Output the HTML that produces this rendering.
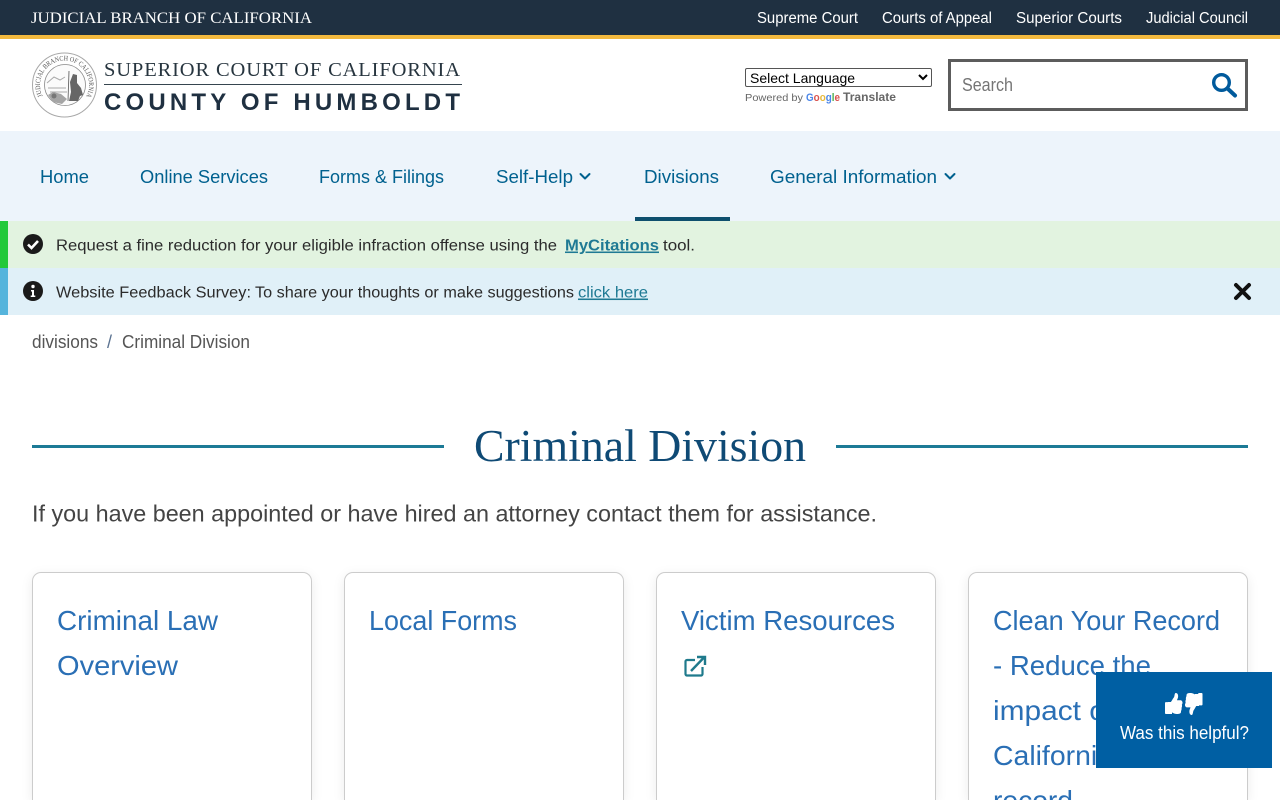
<!DOCTYPE html>
<html lang="en"><head><meta charset="utf-8"><title>Criminal Division</title>
<style>
html,body{margin:0;padding:0;width:1280px;height:800px;overflow:hidden;background:#fff}
body{position:relative;font-family:"Liberation Sans",sans-serif}
.b{position:absolute}
.card{position:absolute;top:572px;width:278px;height:227px;background:#fff;border:1px solid #ccc;border-bottom:0;border-radius:9px 9px 0 0;box-shadow:0 3px 12px rgba(0,0,0,.08)}
svg.o{position:absolute;left:0;top:0;overflow:hidden}
text{font-family:"Liberation Sans",sans-serif}
.s{font-family:"Liberation Serif",serif}
.top{fill:#fff;font-size:15.5px}
.nav{fill:#00618f;font-size:18.5px}
.al{fill:#2b2b2b;font-size:15.5px}
.tt{fill:#2a6fb5;font-size:28px}
select{position:absolute;left:745px;top:68px;width:187px;height:19px;font:14px "Liberation Sans",sans-serif;padding:0;background:#fff;color:#000;border:1px solid #555;border-radius:2px}
</style></head><body>
<div class="b" style="left:0;top:0;width:1280px;height:35px;background:#1f3041"></div>
<div class="b" style="left:0;top:35px;width:1280px;height:4px;background:#f2b93f"></div>
<div class="b" style="left:0;top:131px;width:1280px;height:90px;background:#edf4fb"></div>
<div class="b" style="left:635px;top:217px;width:95px;height:4px;background:#0e4f6e"></div>
<div class="b" style="left:0;top:221px;width:1280px;height:47px;background:#e2f3e0"></div>
<div class="b" style="left:0;top:221px;width:8px;height:47px;background:#22c93a"></div>
<div class="b" style="left:0;top:268px;width:1280px;height:47px;background:#e0f0f8"></div>
<div class="b" style="left:0;top:268px;width:8px;height:47px;background:#55b4dc"></div>
<div class="b" style="left:32px;top:445px;width:412px;height:3px;background:#1c7a96"></div>
<div class="b" style="left:836px;top:445px;width:412px;height:3px;background:#1c7a96"></div>
<div class="b" style="left:948px;top:59px;width:294px;height:46px;border:3px solid #5c5c5c;background:#fff"></div>
<select><option>Select Language</option></select>
<div class="card" style="left:32px"></div>
<div class="card" style="left:344px"></div>
<div class="card" style="left:656px"></div>
<div class="card" style="left:968px"></div>

<svg class="o" width="1280" height="800" viewBox="0 0 1280 800">
<defs><path id="sc" d="M64.500 109.500a24.500 24.500 0 1 1 .01 0"/></defs>
<!-- top bar -->
<text class="s" x="31" y="23" fill="#fff" font-size="16" textLength="281" lengthAdjust="spacingAndGlyphs">JUDICIAL BRANCH OF CALIFORNIA</text>
<text class="top" x="757" y="23" textLength="101" lengthAdjust="spacingAndGlyphs">Supreme Court</text>
<text class="top" x="882" y="23" textLength="110" lengthAdjust="spacingAndGlyphs">Courts of Appeal</text>
<text class="top" x="1016" y="23" textLength="106" lengthAdjust="spacingAndGlyphs">Superior Courts</text>
<text class="top" x="1146" y="23" textLength="102" lengthAdjust="spacingAndGlyphs">Judicial Council</text>
<!-- seal -->
<circle cx="64.500" cy="85" r="32" fill="#fff" stroke="#a8a8a8" stroke-width="1"/>
<circle cx="65" cy="85" r="20.500" fill="#fbfbfb" stroke="#888" stroke-width=".8"/>
<text class="s" font-size="7" fill="#555"><textPath href="#sc" startOffset="27" textLength="100" lengthAdjust="spacingAndGlyphs">JUDICIAL BRANCH OF CALIFORNIA</textPath></text>
<path d="M47 83l7-6 6 3 5-3M48 88h18M50 92h17" fill="none" stroke="#aaa" stroke-width="1"/>
<path d="M48 95l5-3 8 2 6 5-5 5-9-2z" fill="#a5a5a5"/>
<path d="M73 74l-3 8 1 10-2 9h9l2-5 3-1-2-7-4-5 0-8z" fill="#666"/>
<path d="M69 71l-1 30" stroke="#666" stroke-width=".9"/>
<circle cx="54" cy="96" r="2.500" fill="#777"/>
<!-- logo -->
<text class="s" x="104" y="76" fill="#27353f" font-size="20.500" textLength="356" lengthAdjust="spacing">SUPERIOR COURT OF CALIFORNIA</text>
<rect x="104" y="84" width="358" height="1" fill="#36454f"/>
<text x="104" y="110" fill="#1f3041" font-size="24" font-weight="700" textLength="356" lengthAdjust="spacing">COUNTY OF HUMBOLDT</text>
<!-- translate -->
<text x="745" y="101" fill="#666" font-size="10.500" textLength="58" lengthAdjust="spacingAndGlyphs">Powered by</text>
<text x="806" y="101" font-size="11" font-weight="700" textLength="34" lengthAdjust="spacingAndGlyphs"><tspan fill="#4a86e8">G</tspan><tspan fill="#d9534f">o</tspan><tspan fill="#e8b93a">o</tspan><tspan fill="#4a86e8">g</tspan><tspan fill="#4caf50">l</tspan><tspan fill="#d9534f">e</tspan></text>
<text x="843" y="101" fill="#666" font-size="12" font-weight="700" textLength="53" lengthAdjust="spacingAndGlyphs">Translate</text>
<!-- search -->
<text x="962" y="91" fill="#757575" font-size="18" textLength="51" lengthAdjust="spacingAndGlyphs">Search</text>
<circle cx="1221.500" cy="82.500" r="7.800" fill="none" stroke="#005a9c" stroke-width="3.400"/>
<path d="M1227.500 88.500l7.500 7" stroke="#005a9c" stroke-width="4" stroke-linecap="round"/>
<!-- nav -->
<text class="nav" x="40" y="183" textLength="49" lengthAdjust="spacingAndGlyphs">Home</text>
<text class="nav" x="140" y="183" textLength="128" lengthAdjust="spacingAndGlyphs">Online Services</text>
<text class="nav" x="319" y="183" textLength="125" lengthAdjust="spacingAndGlyphs">Forms &amp; Filings</text>
<text class="nav" x="496" y="183" textLength="77" lengthAdjust="spacingAndGlyphs">Self-Help</text>
<path d="M580.500 174l4.500 4.500 4.500-4.500" fill="none" stroke="#00618f" stroke-width="2" stroke-linecap="round" stroke-linejoin="round"/>
<text class="nav" x="644" y="183" textLength="75" lengthAdjust="spacingAndGlyphs">Divisions</text>
<text class="nav" x="770" y="183" textLength="167" lengthAdjust="spacingAndGlyphs">General Information</text>
<path d="M945.500 174l4.500 4.500 4.500-4.500" fill="none" stroke="#00618f" stroke-width="2" stroke-linecap="round" stroke-linejoin="round"/>
<!-- alerts -->
<circle cx="33" cy="244" r="10" fill="#1a1a1a"/>
<path d="M28 244.500l3.500 3.500 6.500-7" fill="none" stroke="#fff" stroke-width="2.600"/>
<text class="al" x="56" y="250.500" textLength="501" lengthAdjust="spacingAndGlyphs">Request a fine reduction for your eligible infraction offense using the</text>
<text x="565" y="250.500" fill="#1f7a94" font-size="15.500" font-weight="700" text-decoration="underline" textLength="94" lengthAdjust="spacingAndGlyphs">MyCitations</text>
<text class="al" x="663" y="250.500" textLength="32" lengthAdjust="spacingAndGlyphs">tool.</text>
<circle cx="33" cy="291" r="10" fill="#1a1a1a"/>
<circle cx="33" cy="286.500" r="1.700" fill="#fff"/>
<path d="M31 290h3v5.500h1.300v1.500h-4.600v-1.500H32V291.500h-1z" fill="#fff"/>
<text class="al" x="56" y="297.500" textLength="195" lengthAdjust="spacingAndGlyphs">Website Feedback Survey:</text>
<text class="al" x="255" y="297.500" textLength="319" lengthAdjust="spacingAndGlyphs">To share your thoughts or make suggestions</text>
<text x="578" y="297.500" fill="#1f7a94" font-size="15.500" text-decoration="underline" textLength="70" lengthAdjust="spacingAndGlyphs">click here</text>
<path d="M1236 285l13 13m0-13l-13 13" stroke="#111" stroke-width="4" stroke-linecap="round"/>
<!-- breadcrumb -->
<text x="32" y="348" fill="#555" font-size="18" textLength="66" lengthAdjust="spacingAndGlyphs">divisions</text>
<text x="107" y="348" fill="#5c7391" font-size="18">/</text>
<text x="122" y="348" fill="#555" font-size="18" textLength="128" lengthAdjust="spacingAndGlyphs">Criminal Division</text>
<!-- heading -->
<text class="s" x="474" y="461" fill="#0f4a75" font-size="45" textLength="332" lengthAdjust="spacingAndGlyphs">Criminal Division</text>
<text x="32" y="521.500" fill="#444" font-size="23.500" textLength="845" lengthAdjust="spacingAndGlyphs">If you have been appointed or have hired an attorney contact them for assistance.</text>
<!-- cards -->
<text class="tt" x="57" y="630" textLength="161" lengthAdjust="spacingAndGlyphs">Criminal Law</text>
<text class="tt" x="57" y="675" textLength="121" lengthAdjust="spacingAndGlyphs">Overview</text>
<text class="tt" x="369" y="630" textLength="148" lengthAdjust="spacingAndGlyphs">Local Forms</text>
<text class="tt" x="681" y="630" textLength="214" lengthAdjust="spacingAndGlyphs">Victim Resources</text>
<path d="M695 660h-8a1.500 1.500 0 0 0-1.500 1.500v12.500a1.500 1.500 0 0 0 1.500 1.500h14a1.500 1.500 0 0 0 1.500-1.500v-7" fill="none" stroke="#1f7a8c" stroke-width="2.200"/>
<path d="M691 671l12.500-13M697 657h8v8" fill="none" stroke="#1f7a8c" stroke-width="2.400"/>
<text class="tt" x="993" y="630" textLength="227" lengthAdjust="spacingAndGlyphs">Clean Your Record</text>
<text class="tt" x="993" y="675" textLength="158" lengthAdjust="spacingAndGlyphs">- Reduce the</text>
<text class="tt" x="993" y="720" textLength="146" lengthAdjust="spacingAndGlyphs">impact of a</text>
<text class="tt" x="993" y="765" textLength="120" lengthAdjust="spacingAndGlyphs">California</text>
<text class="tt" x="993" y="810" textLength="80" lengthAdjust="spacingAndGlyphs">record</text>
<!-- feedback -->
<rect x="1096" y="672" width="176" height="96" fill="#005fa3"/>
<g fill="#fff">
<path transform="translate(1165 693) scale(.0342 .041)" d="M104 224H24c-13.255 0-24 10.745-24 24v240c0 13.255 10.745 24 24 24h80c13.255 0 24-10.745 24-24V248c0-13.255-10.745-24-24-24zM384 81.452c0 42.416-25.970 66.208-33.277 94.548h101.723c33.397 0 59.397 27.746 59.553 58.098.084 17.938-7.546 37.249-19.439 49.197l-.11.11c9.836 23.337 8.237 56.037-9.308 79.469 8.681 25.895-.069 57.704-16.382 74.757 4.298 17.598 2.244 32.575-6.148 44.632C440.202 511.587 389.616 512 346.839 512l-2.845-.001c-48.287-.017-87.806-17.598-119.560-31.725-15.957-7.099-36.821-15.887-52.651-16.178-6.540-.12-11.783-5.457-11.783-11.998v-213.770c0-3.200 1.282-6.271 3.558-8.521 39.614-39.144 56.648-80.587 89.117-113.111 14.804-14.832 20.188-37.236 25.393-58.902C282.515 39.293 291.817 0 312 0c24 0 72 8 72 81.452z"/>
<rect x="1168" y="702" width="4" height="12"/>
<path transform="translate(1202.500 715) rotate(180) scale(.0342 .043)" d="M104 224H24c-13.255 0-24 10.745-24 24v240c0 13.255 10.745 24 24 24h80c13.255 0 24-10.745 24-24V248c0-13.255-10.745-24-24-24zM384 81.452c0 42.416-25.970 66.208-33.277 94.548h101.723c33.397 0 59.397 27.746 59.553 58.098.084 17.938-7.546 37.249-19.439 49.197l-.11.11c9.836 23.337 8.237 56.037-9.308 79.469 8.681 25.895-.069 57.704-16.382 74.757 4.298 17.598 2.244 32.575-6.148 44.632C440.202 511.587 389.616 512 346.839 512l-2.845-.001c-48.287-.017-87.806-17.598-119.560-31.725-15.957-7.099-36.821-15.887-52.651-16.178-6.540-.12-11.783-5.457-11.783-11.998v-213.770c0-3.200 1.282-6.271 3.558-8.521 39.614-39.144 56.648-80.587 89.117-113.111 14.804-14.832 20.188-37.236 25.393-58.902C282.515 39.293 291.817 0 312 0c24 0 72 8 72 81.452z"/>
<rect x="1195" y="694" width="4" height="12"/>
</g>
<text x="1120" y="739" fill="#fff" font-size="18" textLength="129" lengthAdjust="spacingAndGlyphs">Was this helpful?</text>
</svg>
</body></html>
